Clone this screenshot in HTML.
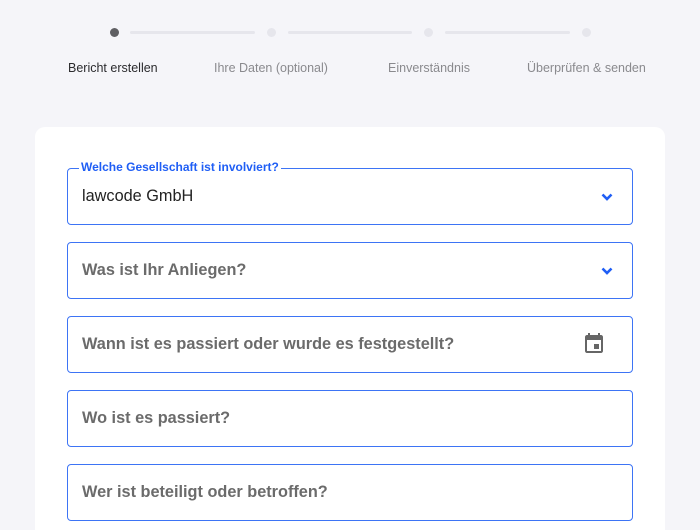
<!DOCTYPE html>
<html><head><meta charset="utf-8"><style>
*{box-sizing:border-box;margin:0;padding:0}
html,body{width:700px;height:530px;overflow:hidden}
body{background:#f5f5f9;font-family:"Liberation Sans",sans-serif;position:relative}
.dot{position:absolute;top:28px;width:9px;height:9px;border-radius:50%;background:#e6e6ec}
.line{position:absolute;top:31px;height:3px;background:#e6e6ec;border-radius:2px}
.st{position:absolute;top:61px;font-size:12.5px;color:#8a8a8e}
.card{position:absolute;left:35px;top:127px;width:630px;height:403px;background:#fff;border-radius:10px 10px 0 0}
.f{position:absolute;left:67px;width:566px;height:57px;border:1.5px solid #3d74f5;border-radius:4px}
.f span{position:absolute;left:14px;top:18px;font-size:16.3px;color:#6b6b6b;font-weight:bold}
.chev{position:absolute;right:18px;top:23px}
</style></head><body>
<div class="dot" style="left:110px;background:#5f5f63"></div>
<div class="line" style="left:130px;width:125px"></div>
<div class="dot" style="left:267px"></div>
<div class="line" style="left:288px;width:124px"></div>
<div class="dot" style="left:424px"></div>
<div class="line" style="left:445px;width:125px"></div>
<div class="dot" style="left:582px"></div>
<div class="st" style="left:68px;color:#2b2b2e">Bericht erstellen</div>
<div class="st" style="left:214px">Ihre Daten (optional)</div>
<div class="st" style="left:388px">Einverständnis</div>
<div class="st" style="left:527px">Überprüfen &amp; senden</div>
<div class="card"></div>
<div class="f" style="top:168px"><span style="font-weight:normal;color:#222">lawcode GmbH</span>
<svg class="chev" width="14" height="10" viewBox="0 0 14 10"><path d="M2.5 2.5l4.5 4.5 4.5-4.5" stroke="#1f5ef5" stroke-width="2.6" fill="none"/></svg></div>
<div style="position:absolute;left:79px;top:160px;background:#fff;padding:0 2px;font-size:12px;font-weight:bold;color:#1f5ef5;line-height:15px">Welche Gesellschaft ist involviert?</div>
<div class="f" style="top:242px"><span>Was ist Ihr Anliegen?</span>
<svg class="chev" width="14" height="10" viewBox="0 0 14 10"><path d="M2.5 2.5l4.5 4.5 4.5-4.5" stroke="#1f5ef5" stroke-width="2.6" fill="none"/></svg></div>
<div class="f" style="top:316px"><span>Wann ist es passiert oder wurde es festgestellt?</span>
<svg style="position:absolute;left:514px;top:15px" width="24" height="24" viewBox="0 0 24 24"><path fill="#666" d="M19 3h-1V1h-2v2H8V1H6v2H5c-1.1 0-2 .9-2 2v14c0 1.1.9 2 2 2h14c1.1 0 2-.9 2-2V5c0-1.1-.9-2-2-2zm0 16H5V8h14v11zM12 12h5v5h-5z"/></svg></div>
<div class="f" style="top:390px"><span>Wo ist es passiert?</span></div>
<div class="f" style="top:464px"><span>Wer ist beteiligt oder betroffen?</span></div>
</body></html>
